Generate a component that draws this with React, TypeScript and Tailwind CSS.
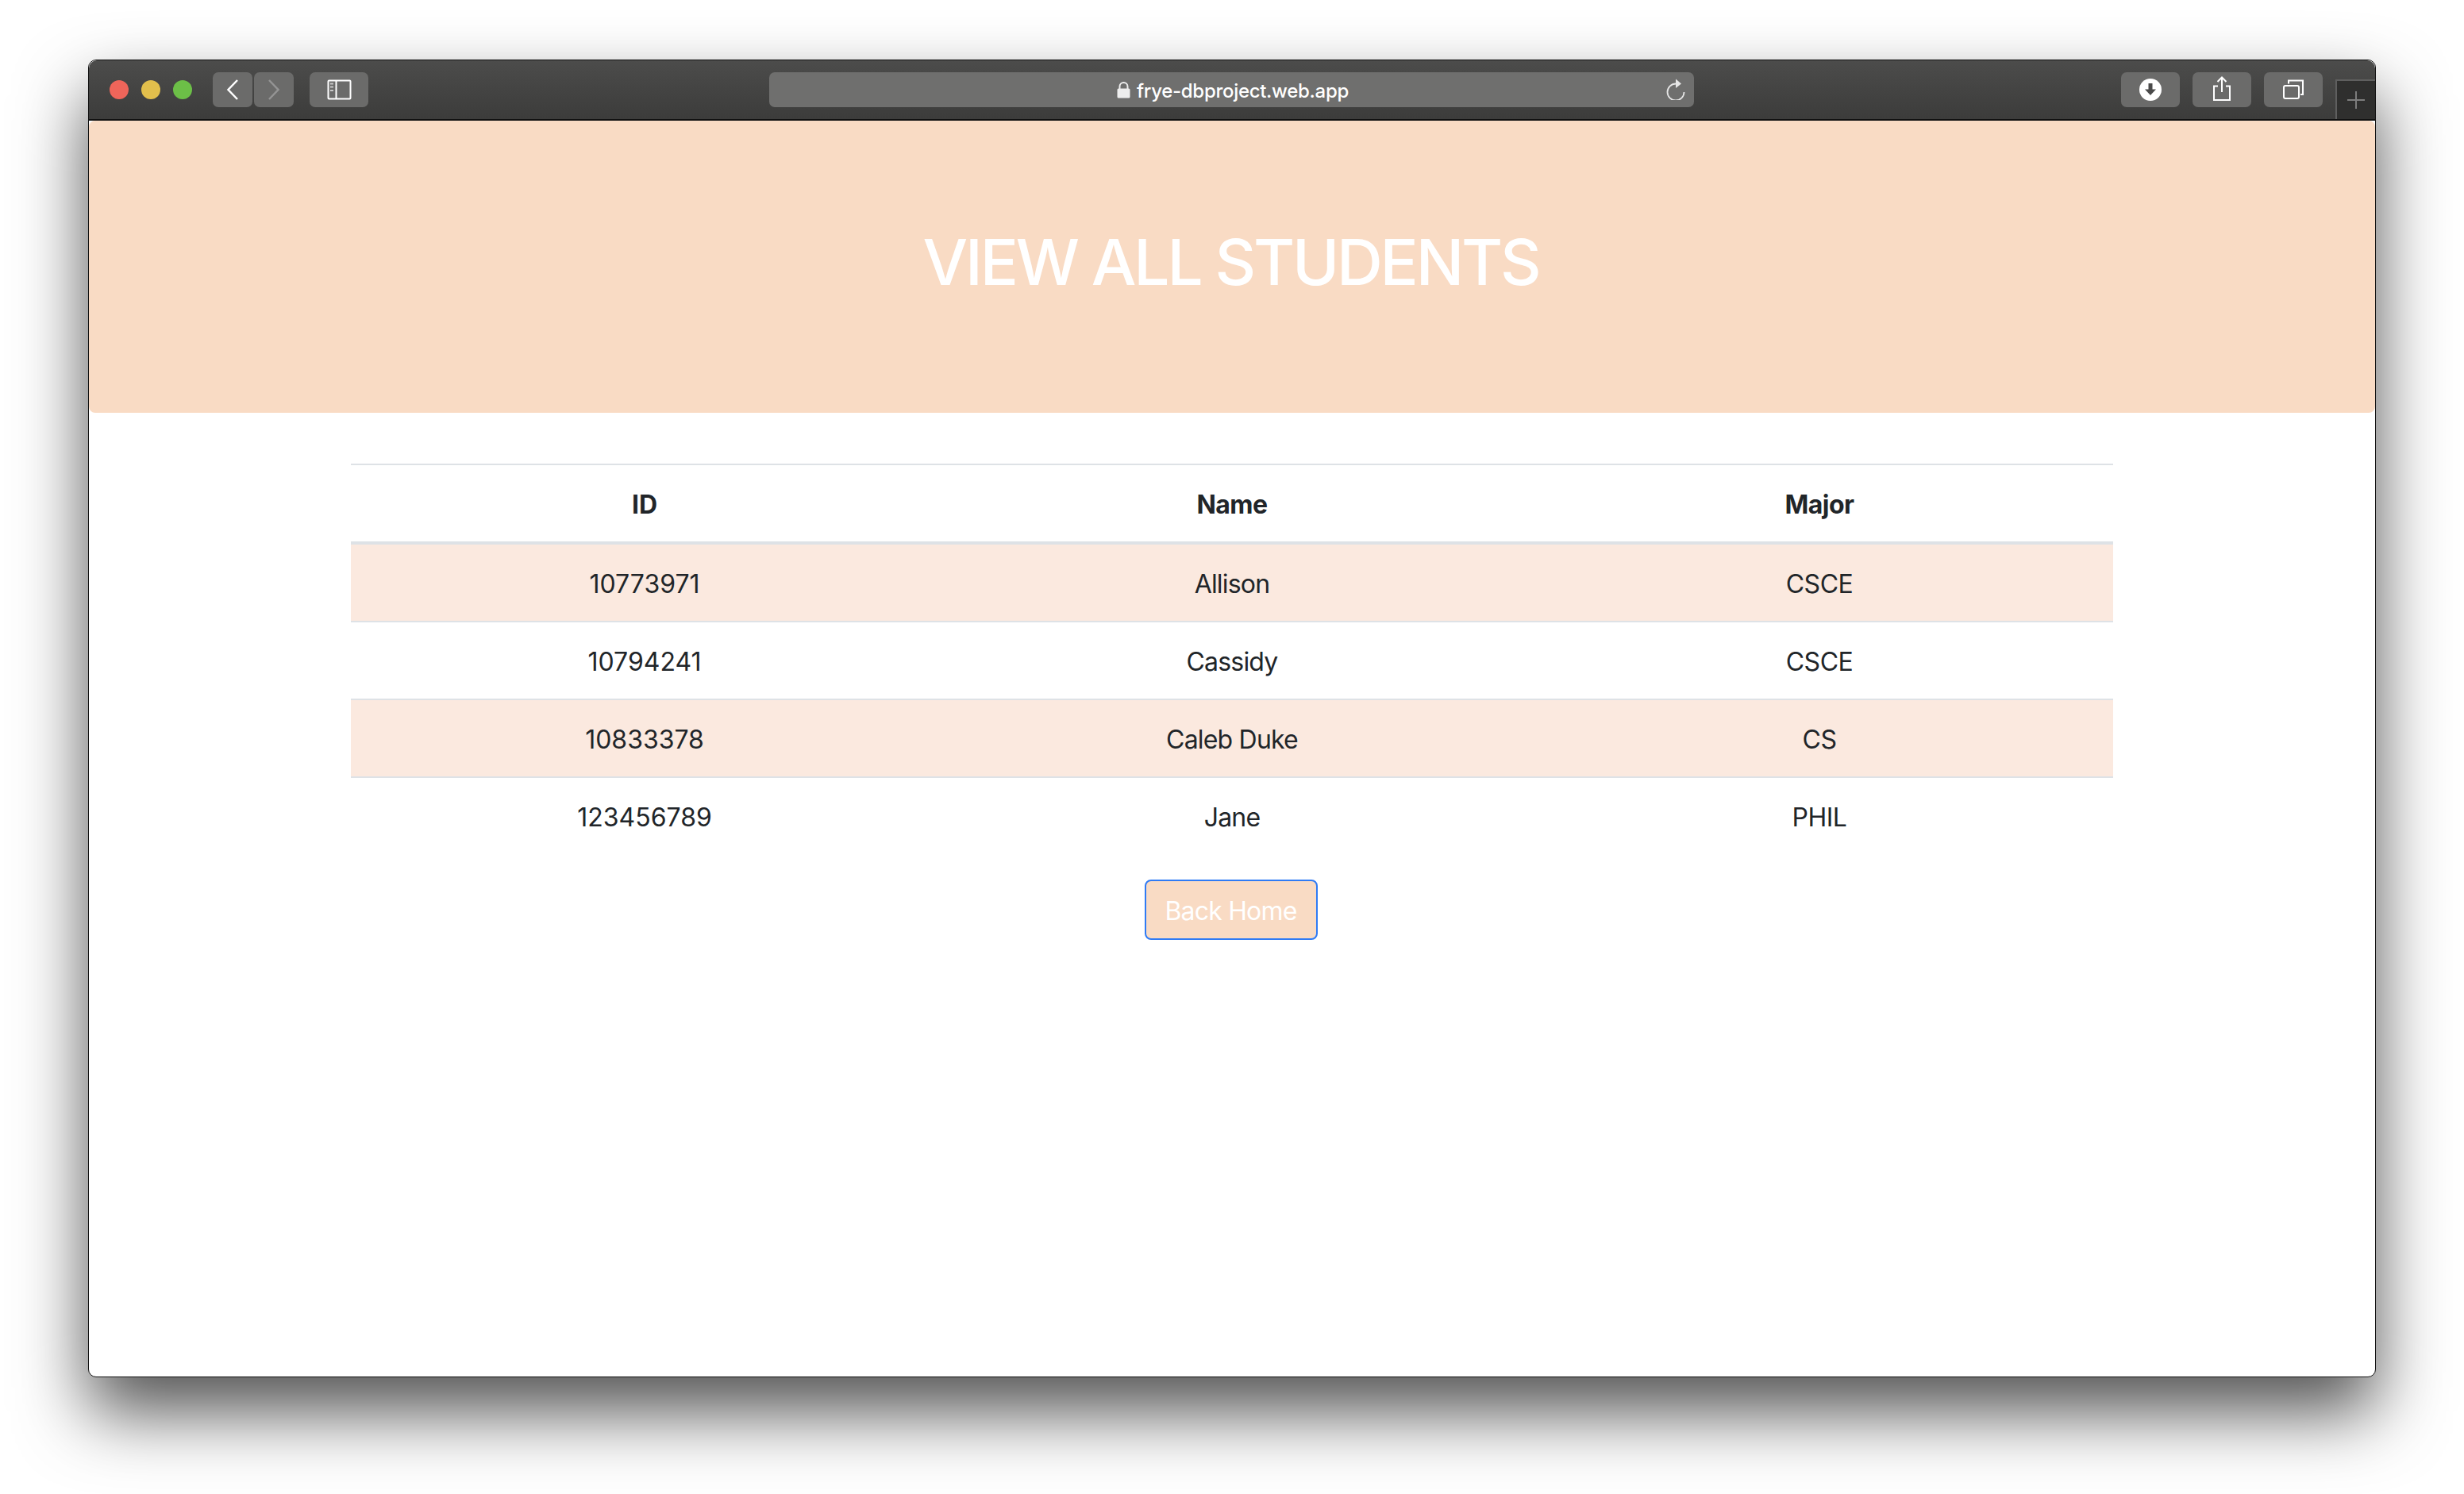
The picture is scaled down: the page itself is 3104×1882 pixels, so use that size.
import React from 'react';

const rows = [
  { id: '10773971', name: 'Allison', major: 'CSCE' },
  { id: '10794241', name: 'Cassidy', major: 'CSCE' },
  { id: '10833378', name: 'Caleb Duke', major: 'CS' },
  { id: '123456789', name: 'Jane', major: 'PHIL' },
];

const Toolbar: React.FC = () => {
  const btn = 'h-[44px] rounded-[7px] bg-[#6b6b6a] shrink-0';
  return (
    <div className="flex h-[76px] items-center border-b-2 border-[#111111] bg-gradient-to-b from-[#4c4c4b] to-[#3c3c3b] pl-[26px] rounded-t-[10px]">
      <div className="h-[24px] w-[24px] rounded-full bg-[#ef655a]" />
      <div className="ml-[16px] h-[24px] w-[24px] rounded-full bg-[#e2bf4c]" />
      <div className="ml-[16px] h-[24px] w-[24px] rounded-full bg-[#6cbf47]" />

      <div className={`${btn} ml-[26px] w-[50px]`}>
        <svg width="50" height="44" fill="none" stroke="#ffffff" strokeWidth="2.5">
          <path d="M31 10 L19.5 22 L31 34" />
        </svg>
      </div>
      <div className={`${btn} ml-[2px] w-[50px]`}>
        <svg width="50" height="44" fill="none" stroke="#949494" strokeWidth="2.5">
          <path d="M19 10 L30.5 22 L19 34" />
        </svg>
      </div>
      <div className={`${btn} ml-[20px] w-[74px]`}>
        <svg width="74" height="44" fill="none" stroke="#ffffff" strokeWidth="2">
          <rect x="23.5" y="10.5" width="28" height="23" rx="1" />
          <path d="M33.5 10.5 V33.5" />
          <path d="M26 14.5 H30 M26 18.5 H30 M26 23 H30" stroke="#c9c9c9" />
        </svg>
      </div>

      <div className="relative ml-[505px] flex h-[44px] w-[1165px] shrink-0 items-center justify-center rounded-[7px] bg-[#6f6f6e] pl-[3px] pt-[4px]">
        <svg width="17" height="21" className="-mt-[4px] mr-[8px] shrink-0" fill="none">
          <path d="M3.5 9 V6 a5 5 0 0 1 10 0 V9" stroke="#eeeeee" strokeWidth="2" />
          <rect x="0.5" y="8.5" width="16" height="12" rx="1.5" fill="#eeeeee" />
        </svg>
        <span className="font-['Inter',sans-serif] text-[24px] font-medium leading-[40px] tracking-[-0.3px] text-white">frye-dbproject.web.app</span>
        <svg width="26" height="28" className="absolute left-[1129px] top-[7px]" fill="none" stroke="#e6e6e6" strokeWidth="1.8">
          <path d="M13 7.5 a10.5 10.5 0 1 0 10.5 10.5" />
          <path d="M13 1.5 L20 7.5 L13 13 Z" fill="#e6e6e6" stroke="none" />
        </svg>
      </div>

      <div className={`${btn} ml-[538px] w-[74px]`}>
        <svg width="74" height="44">
          <circle cx="37" cy="22" r="14" fill="#ffffff" />
          <path d="M34.5 14 H39.5 V21.5 H44 L37 29 L30 21.5 H34.5 Z" fill="#4a4a4a" />
        </svg>
      </div>
      <div className={`${btn} ml-[16px] w-[74px]`}>
        <svg width="74" height="44" fill="none" stroke="#ffffff" strokeWidth="2">
          <path d="M32 17.5 H27 V35 H47 V17.5 H42" />
          <path d="M37 7 V25 M31.5 12 L37 6.5 L42.5 12" />
        </svg>
      </div>
      <div className={`${btn} ml-[16px] w-[74px]`}>
        <svg width="74" height="44" fill="none" stroke="#ffffff" strokeWidth="2">
          <rect x="25" y="17" width="19" height="16" rx="2" />
          <path d="M31 14.5 V10.5 H49 V28 H46" />
        </svg>
      </div>

      <div className="ml-[16px] flex h-[50px] w-[50px] shrink-0 items-center justify-center self-end border-l-2 border-t-2 border-[#5f5f5f] bg-[#2f2f2e]">
        <svg width="24" height="24" fill="none" stroke="#7d7d7d" strokeWidth="2">
          <path d="M12 1 V23 M1 12 H23" />
        </svg>
      </div>
    </div>
  );
};

const App: React.FC = () => {
  const cell = 'px-[24px] pt-[26px] pb-[22px]';
  return (
    <div className="h-[1882px] w-[3104px] overflow-hidden bg-white pl-[111px] pt-[75px] font-['Inter',sans-serif] text-[#212529]">
      <div className="h-[1660px] w-[2882px] rounded-[10px] border border-[#111111] bg-white shadow-[0_44px_88px_rgba(0,0,0,0.68)]">
        <Toolbar />
        <div className="rounded-[8px] bg-[#f9dbc4] pb-[126px] pr-[3px] pt-[130px] text-center">
          <h1 className="mb-[16px] text-[80px] font-medium leading-[96px] tracking-[-3.2px] text-white">VIEW ALL STUDENTS</h1>
        </div>
        <div className="mt-[64px] text-center">
          <table className="mx-auto w-[2220px] table-fixed border-collapse text-[32px] leading-[48px]">
            <thead>
              <tr className="border-t-2 border-b-4 border-[#dee2e6]">
                <th className={`${cell} font-bold`}>ID</th>
                <th className={`${cell} font-bold tracking-[-0.5px]`}>Name</th>
                <th className={`${cell} font-bold tracking-[-0.5px]`}>Major</th>
              </tr>
            </thead>
            <tbody>
              {rows.map((r, i) => (
                <tr key={r.id} className={i % 2 === 0 ? 'border-b-2 border-[#dee2e6] bg-[#fbe9df]' : i < rows.length - 1 ? 'border-b-2 border-[#dee2e6]' : ''}>
                  <td className={cell}>{r.id}</td>
                  <td className={`${cell} tracking-[-0.8px]`}>{r.name}</td>
                  <td className={`${cell} tracking-[-0.5px]`}>{r.major}</td>
                </tr>
              ))}
            </tbody>
          </table>
          <button className="mr-[3px] mt-[32px] w-[218px] rounded-[8px] border-2 border-[#2f7bf5] bg-[#f9dbc4] pb-[10px] pt-[14px] text-[32px] leading-[48px] tracking-[-0.8px] text-white">
            Back Home
          </button>
        </div>
      </div>
    </div>
  );
};

export default App;
